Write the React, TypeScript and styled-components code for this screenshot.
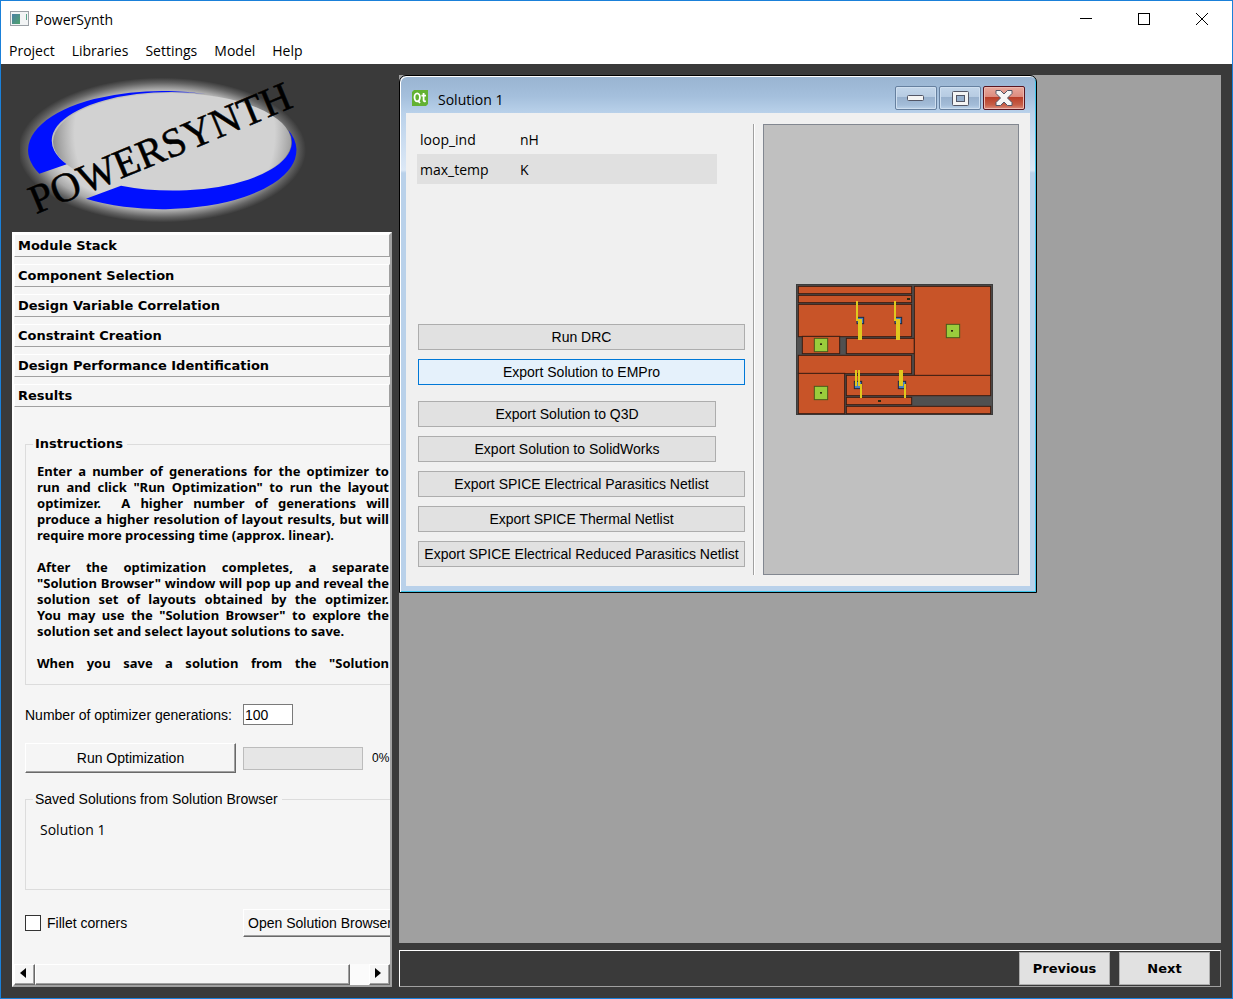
import React from "react";
import styled, { createGlobalStyle, css } from "styled-components";

const UI = `"Open Sans", "Noto Sans", sans-serif`;
const GOTHIC = `"Liberation Sans", Arial, sans-serif`;
const GOTHIC_BOLD = `"DejaVu Sans", Verdana, sans-serif`;
const DARK = "#3a3a3a";
const PANEL = "#f5f5f5";

const GlobalStyle = createGlobalStyle`
  *, *::before, *::after { box-sizing: border-box; }
  body { margin: 0; background: ${DARK}; color: #000; font: 14px/20px ${UI}; }
  button, input { margin: 0; padding: 0; color: inherit; font: inherit; border-radius: 0; }
  svg { display: block; }
`;

const Shell = styled.div`
  display: flex;
  flex-direction: column;
  min-height: 100vh;
  border: 1px solid #1a80d9;
  background: ${DARK};
`;

const TitleBar = styled.header`
  display: flex;
  align-items: center;
  height: 36px;
  padding: 0 1px 0 9px;
  background: #fff;
`;

const AppTitle = styled.h1`
  flex: 1;
  margin: 0 0 0 5px;
  padding-top: 2px;
  font-size: 14px;
  font-weight: 400;
`;

const CaptionButton = styled.button`
  display: grid;
  place-items: center;
  width: 58px;
  height: 36px;
  border: 0;
  background: none;
`;

const MenuBar = styled.nav`
  display: flex;
  gap: 17px;
  height: 27px;
  padding: 4px 8px 0;
  background: #fff;
`;

const MenuItem = styled.button`
  height: 20px;
  border: 0;
  background: none;
`;

const Workspace = styled.main`
  flex: 1;
  display: grid;
  grid-template-columns: 380px minmax(0, 1fr);
  gap: 7px;
  padding: 0 11px 11px;
`;

const Sidebar = styled.div`
  display: flex;
  flex-direction: column;
  min-width: 0;
`;

const LogoBox = styled.div`
  height: 168px;
  padding: 11px 0 0 8px;
`;

const Toolbox = styled.aside`
  flex: 1;
  display: flex;
  flex-direction: column;
  min-width: 0;
  overflow: hidden;
  border: 2px solid;
  border-color: #fff #a0a0a0 #a0a0a0 #fff;
  background: ${PANEL};
  font: 14px/20px ${GOTHIC};
`;

const SectionList = styled.div`
  display: flex;
  flex-direction: column;
  gap: 7px;
`;

const SectionButton = styled.button`
  height: 23px;
  padding: 1px 3px 0;
  border: 1px solid;
  border-color: #fff #a0a0a0 #a0a0a0 #fff;
  background: ${PANEL};
  font: 700 13px/20px ${GOTHIC_BOLD};
  text-align: left;
`;

const ResultsPage = styled.div`
  display: flex;
  flex-direction: column;
  width: 420px;
  padding: 27px 0 0 11px;
`;

const Group = styled.fieldset<{ $height: number }>`
  height: ${(p) => p.$height}px;
  margin: 0;
  padding: 0 0 0 11px;
  border: 1px solid #dcdcdc;
`;

const GroupTitle = styled.legend<{ $strong?: boolean }>`
  margin-left: -4px;
  padding: 0 4px 0 2px;
  line-height: 20px;
  ${(p) => p.$strong && css`font: 700 13px/20px ${GOTHIC_BOLD};`}
`;

const Prose = styled.div`
  width: 352px;
  padding-top: 9px;
  font: 700 13px/16px "Noto Sans", ${UI};
`;

const Paragraph = styled.p`
  margin: 0 0 16px;
`;

const Line = styled.span<{ $last?: boolean }>`
  display: block;
  white-space: nowrap;
  text-align: justify;
  text-align-last: ${(p) => (p.$last ? "left" : "justify")};
`;

const FormGrid = styled.div`
  display: grid;
  grid-template-columns: 211px 120px auto;
  align-items: center;
  column-gap: 7px;
  row-gap: 18px;
  padding: 19px 0 16px;
  white-space: nowrap;
`;

const GenerationsInput = styled.input`
  width: 50px;
  height: 21px;
  padding-left: 1px;
  border: 1px solid #7a7a7a;
  background: #fff;
`;

const raised = css`
  border: 1px solid;
  border-color: #fff #696969 #696969 #fff;
  box-shadow: inset -1px -1px 0 #a0a0a0;
  background: ${PANEL};
`;

const RaisedButton = styled.button<{ $height: number }>`
  ${raised}
  height: ${(p) => p.$height}px;
  white-space: nowrap;
`;

const Progress = styled.progress`
  appearance: none;
  width: 120px;
  height: 23px;
  border: 1px solid #bcbcbc;
  background: #e6e6e6;
  &::-webkit-progress-bar { background: #e6e6e6; }
  &::-webkit-progress-value { background: #06b025; }
`;

const Percent = styled.output`
  padding-left: 2px;
  font-size: 12px;
`;

const SolutionList = styled.ul`
  margin: 0;
  padding: 11px 3px;
  list-style: none;
  font: 14px/20px ${UI};
`;

const FooterGrid = styled.div`
  display: grid;
  grid-template-columns: 211px 154px;
  align-items: center;
  column-gap: 7px;
  padding-top: 19px;
`;

const CheckLabel = styled.label`
  display: flex;
  align-items: center;
  gap: 6px;
`;

const CheckBox = styled.input`
  appearance: none;
  width: 16px;
  height: 16px;
  border: 1px solid #333;
  background: #fff;
`;

const ScrollBar = styled.div`
  display: grid;
  grid-template-columns: 21px 315px 1fr 21px;
  height: 21px;
  margin-top: auto;
  background: #fbfbfb;
`;

const ScrollButton = styled.button`
  ${raised}
  display: grid;
  place-items: center;
  padding: 0 3px 3px 0;
`;

const ScrollThumb = styled.div`
  ${raised}
`;

const MainColumn = styled.div`
  display: flex;
  flex-direction: column;
  gap: 7px;
  min-width: 0;
  padding-top: 11px;
`;

const MdiArea = styled.section`
  position: relative;
  flex: 1;
  min-height: 600px;
  background: #a0a0a0;
`;

const SubWindow = styled.article`
  position: absolute;
  top: 0;
  left: 0;
  width: 638px;
  padding: 0 6px 6px;
  border: 1px solid #000;
  border-radius: 7px 7px 0 0;
  background: linear-gradient(#99b4d1, #a4bfdc 20px, #b9d1ea 37px, #dce8f6 94px, #b9d1ea 97px);
  box-shadow: inset 1px 1px 0 #fff, inset -1px -1px 0 #3ec4ea;
`;

const SubTitleBar = styled.header`
  display: flex;
  align-items: center;
  height: 37px;
  padding: 7px 5px 0 6px;
`;

const SubTitle = styled.h2`
  flex: 1;
  margin: 0 0 0 10px;
  padding-top: 3px;
  font-size: 14px;
  font-weight: 400;
`;

const SubControls = styled.div`
  display: flex;
  gap: 2px;
`;

const GlassButton = styled.button<{ $close?: boolean }>`
  display: grid;
  place-items: center;
  width: 42px;
  height: 24px;
  border: 1px solid ${(p) => (p.$close ? "#5a1520" : "#66809f")};
  border-radius: 2px;
  background: ${(p) =>
    p.$close
      ? "linear-gradient(#e9a99d, #dc8b7e 10px, #b83c27 10px, #c75f48 18px, #dd8f80)"
      : "linear-gradient(#c3d6ea, #b6cbe2 10px, #97b0cd 10px, #a3bcd8 18px, #bdd3ea)"};
  box-shadow: inset 0 0 0 1px ${(p) => (p.$close ? "#edb8ae" : "#cfdff0")};
`;

const SubBody = styled.div`
  display: grid;
  grid-template-columns: 328px 2px 256px;
  justify-content: space-between;
  padding: 11px;
  background: #f0f0f0;
`;

const SolutionPane = styled.div`
  display: flex;
  flex-direction: column;
  justify-content: space-between;
`;

const Metrics = styled.table`
  width: 300px;
  border-collapse: collapse;
  table-layout: fixed;
`;

const MetricRow = styled.tr`
  height: 30px;
  &:nth-child(even) { background: #e0e0e0; }
`;

const cell = css`
  padding: 2px 3px 0;
  font-weight: 400;
  text-align: left;
`;

const MetricName = styled.th`
  ${cell}
  width: 100px;
`;

const MetricUnit = styled.td`
  ${cell}
`;

const Actions = styled.div`
  display: flex;
  flex-direction: column;
  gap: 16px;
  padding: 0 0 8px 1px;
`;

const ActionGroup = styled.div`
  display: flex;
  flex-direction: column;
  gap: 9px;
`;

const ActionButton = styled.button<{ $narrow?: boolean; $active?: boolean }>`
  width: ${(p) => (p.$narrow ? 298 : 327)}px;
  height: 26px;
  border: 1px solid ${(p) => (p.$active ? "#0078d7" : "#adadad")};
  background: ${(p) => (p.$active ? "#e5f1fb" : "#e1e1e1")};
  font: 14px/20px ${GOTHIC};
  white-space: nowrap;
`;

const Separator = styled.div`
  border-left: 1px solid #a0a0a0;
  border-right: 1px solid #fff;
`;

const LayoutView = styled.div`
  display: grid;
  place-items: center;
  height: 451px;
  padding-left: 6px;
  border: 1px solid #828790;
  background: #c0c0c0;
`;

const NavBar = styled.footer`
  display: flex;
  justify-content: flex-end;
  gap: 9px;
  height: 37px;
  padding: 1px 10px 1px 0;
  border: 1px solid;
  border-color: #fff #a0a0a0 #a0a0a0 #fff;
`;

const NavButton = styled.button`
  width: 91px;
  height: 33px;
  padding-top: 1px;
  border: 1px solid #adadad;
  background: #e1e1e1;
  font: 700 13px/20px ${GOTHIC_BOLD};
`;

const SECTIONS = [
  "Module Stack",
  "Component Selection",
  "Design Variable Correlation",
  "Constraint Creation",
  "Design Performance Identification",
  "Results",
];

const INSTRUCTIONS = [
  [
    "Enter a number of generations for the optimizer to",
    'run and click "Run Optimization" to run the layout',
    "optimizer. \u00a0A higher number of generations will",
    "produce a higher resolution of layout results, but will",
    "require more processing time (approx. linear).",
  ],
  [
    "After the optimization completes, a separate",
    '"Solution Browser" window will pop up and reveal the',
    "solution set of layouts obtained by the optimizer.",
    'You may use the "Solution Browser" to explore the',
    "solution set and select layout solutions to save.",
  ],
];

function AppIcon() {
  return (
    <svg width="20" height="16" viewBox="0 0 20 16">
      <defs>
        <linearGradient id="screen" x1="0" y1="0" x2="1" y2="1">
          <stop offset="0" stopColor="#4a7fa5" />
          <stop offset="1" stopColor="#4fa36c" />
        </linearGradient>
      </defs>
      <rect x=".5" y=".5" width="18" height="14" fill="#f2f4f5" stroke="#9aa0a6" />
      <rect x="2" y="3" width="8" height="10" fill="url(#screen)" />
      <rect x="16" y="3" width="1" height="6" fill="#5aa58a" />
    </svg>
  );
}

function Logo() {
  return (
    <svg width="290" height="152" viewBox="60 225 870 456" role="img" aria-label="PowerSynth">
      <defs>
        <radialGradient id="halo">
          <stop offset="0.74" stopColor="#d2d2d2" />
          <stop offset="0.84" stopColor="#aaaaaa" />
          <stop offset="0.93" stopColor="#646464" />
          <stop offset="1" stopColor={DARK} />
        </radialGradient>
        <radialGradient id="shade">
          <stop offset="0.8" stopColor="#808080" stopOpacity="0" />
          <stop offset="1" stopColor="#707070" stopOpacity="0.8" />
        </radialGradient>
        <clipPath id="disc">
          <ellipse cx="516" cy="425" rx="357" ry="146" />
        </clipPath>
      </defs>
      <ellipse cx="486" cy="450" rx="432" ry="217" fill="url(#halo)" />
      <ellipse cx="516" cy="425" rx="357" ry="146" fill="#d2d2d2" />
      <ellipse cx="524" cy="400" rx="375" ry="380" fill="url(#shade)" clipPath="url(#disc)" />
      <g fill="#0010ff">
        <path d="M118 521A402 177 0 0 1 620 283A357 146 0 0 0 200 493Z" />
        <path d="M258 596A402 177 0 0 0 865 390A357 146 0 0 1 363 557Z" />
      </g>
      <text
        transform="translate(108 643) rotate(-22.6)"
        fontFamily='"Liberation Serif", serif'
        fontSize="123"
        stroke="#000"
        strokeWidth="1.5"
      >
        POWERSYNTH
      </text>
    </svg>
  );
}

type Box = [number, number, number, number];

const TRACES: Box[] = [
  [40, 34, 340, 22],
  [40, 61, 340, 22],
  [40, 88, 340, 97],
  [52, 184, 112, 52],
  [184, 190, 204, 46],
  [40, 241, 340, 55],
  [388, 34, 229, 268],
  [40, 295, 139, 121],
  [184, 301, 433, 61],
  [184, 367, 196, 22],
  [184, 394, 433, 22],
];
const DEVICES: Box[] = [
  [88, 190, 40, 40],
  [88, 334, 40, 40],
  [484, 148, 40, 40],
];
const DIES: Box[] = [
  [216, 127, 20, 19],
  [330, 127, 20, 19],
  [208, 319, 22, 22],
  [340, 319, 22, 22],
];
const WIRES: Box[] = [
  [213, 78, 6, 60],
  [219, 132, 12, 63],
  [327, 78, 6, 60],
  [333, 132, 12, 63],
  [210, 285, 6, 48],
  [219, 285, 6, 48],
  [225, 327, 6, 42],
  [342, 285, 12, 48],
  [357, 327, 6, 42],
];
const PADS: Box[] = [
  [366, 69, 9, 6],
  [279, 375, 9, 6],
  [105, 205, 6, 5],
  [105, 351, 6, 5],
  [498, 165, 6, 5],
];

function Rects({ boxes }: { boxes: Box[] }) {
  return (
    <>
      {boxes.map(([x, y, w, h]) => (
        <rect key={`${x}-${y}`} x={x} y={y} width={w} height={h} />
      ))}
    </>
  );
}

function ModuleLayout() {
  return (
    <svg width="197" height="131" viewBox="33 27 591 393" role="img" aria-label="Module layout">
      <rect x="33" y="27" width="591" height="393" fill="#505050" />
      <rect x="34.5" y="28.5" width="588" height="390" fill="none" stroke="#3c3c3c" strokeWidth="3" />
      <g fill="#c85428" stroke="#3a1d12" strokeWidth="3"><Rects boxes={TRACES} /></g>
      <g fill="#9acd3c" stroke="#4a5a1c" strokeWidth="3"><Rects boxes={DEVICES} /></g>
      <g fill="#4a7fc0" stroke="#1f2a3c" strokeWidth="3"><Rects boxes={DIES} /></g>
      <g fill="#e0c81e"><Rects boxes={WIRES} /></g>
      <g fill="#2e2a10"><Rects boxes={PADS} /></g>
    </svg>
  );
}

function QtIcon() {
  return (
    <svg width="16" height="16" viewBox="0 0 16 16">
      <path d="M2 0H16V14L14 16H0V2Z" fill="#63b132" />
      <g fill="none" stroke="#fff" strokeWidth="1.8">
        <ellipse cx="5.2" cy="7.3" rx="2.7" ry="4" />
        <path d="M5.8 10.5L8 13M11.6 3V10.2Q11.6 11.6 13.8 11.2M9.4 5.7H14" />
      </g>
    </svg>
  );
}

export default function App() {
  return (
    <Shell>
      <GlobalStyle />
      <TitleBar>
        <AppIcon />
        <AppTitle>PowerSynth</AppTitle>
        <CaptionButton aria-label="Minimize">
          <svg width="12" height="12" stroke="#000"><path d="M0 5.5H12" /></svg>
        </CaptionButton>
        <CaptionButton aria-label="Maximize">
          <svg width="12" height="12" fill="none" stroke="#000"><rect x=".5" y=".5" width="11" height="11" /></svg>
        </CaptionButton>
        <CaptionButton aria-label="Close">
          <svg width="12" height="12" stroke="#000"><path d="M0 0L12 12M12 0L0 12" /></svg>
        </CaptionButton>
      </TitleBar>
      <MenuBar>
        {["Project", "Libraries", "Settings", "Model", "Help"].map((m) => (
          <MenuItem key={m}>{m}</MenuItem>
        ))}
      </MenuBar>
      <Workspace>
        <Sidebar>
          <LogoBox><Logo /></LogoBox>
          <Toolbox>
            <SectionList>
              {SECTIONS.map((s) => (
                <SectionButton key={s}>{s}</SectionButton>
              ))}
            </SectionList>
            <ResultsPage>
              <Group $height={251}>
                <GroupTitle $strong>Instructions</GroupTitle>
                <Prose>
                  {INSTRUCTIONS.map((lines) => (
                    <Paragraph key={lines[0]}>
                      {lines.map((line, i) => (
                        <Line key={line} $last={i === lines.length - 1}>{line}</Line>
                      ))}
                    </Paragraph>
                  ))}
                  <Paragraph>
                    <Line>When you save a solution from the "Solution</Line>
                  </Paragraph>
                </Prose>
              </Group>
              <FormGrid>
                <label htmlFor="generations">Number of optimizer generations:</label>
                <GenerationsInput id="generations" defaultValue="100" />
                <span />
                <RaisedButton $height={30}>Run Optimization</RaisedButton>
                <Progress value={0} max={100} aria-label="Optimization progress" />
                <Percent>0%</Percent>
              </FormGrid>
              <Group $height={101}>
                <GroupTitle>Saved Solutions from Solution Browser</GroupTitle>
                <SolutionList>
                  <li>Solution 1</li>
                </SolutionList>
              </Group>
              <FooterGrid>
                <CheckLabel>
                  <CheckBox type="checkbox" />
                  Fillet corners
                </CheckLabel>
                <RaisedButton $height={28}>Open Solution Browser</RaisedButton>
              </FooterGrid>
            </ResultsPage>
            <ScrollBar>
              <ScrollButton aria-label="Scroll left">
                <svg width="6" height="10"><path d="M6 0V10L0 5Z" /></svg>
              </ScrollButton>
              <ScrollThumb />
              <span />
              <ScrollButton aria-label="Scroll right">
                <svg width="6" height="10"><path d="M0 0V10L6 5Z" /></svg>
              </ScrollButton>
            </ScrollBar>
          </Toolbox>
        </Sidebar>
        <MainColumn>
          <MdiArea>
            <SubWindow>
              <SubTitleBar>
                <QtIcon />
                <SubTitle>Solution 1</SubTitle>
                <SubControls>
                  <GlassButton aria-label="Minimize">
                    <svg width="18" height="7"><rect x=".5" y=".5" width="16" height="5" rx="1" fill="#f4f4f4" stroke="#535666" /></svg>
                  </GlassButton>
                  <GlassButton aria-label="Maximize">
                    <svg width="17" height="15" stroke="#535666">
                      <rect x=".5" y=".5" width="16" height="14" rx="1" fill="#f4f4f4" />
                      <rect x="4.5" y="4.5" width="8" height="6" fill="#97b0cd" />
                    </svg>
                  </GlassButton>
                  <GlassButton $close aria-label="Close">
                    <svg width="18" height="16" viewBox="0 0 18 16">
                      <path
                        d="M1 .5H5.5L9 4L12.500 .5H17V3.500L12.500 8L17 12.500V15.500H12.500L9 12L5.500 15.500H1V12.500L5.500 8L1 3.500Z"
                        fill="#f6f6f6"
                        stroke="#535666"
                        strokeLinejoin="round"
                      />
                    </svg>
                  </GlassButton>
                </SubControls>
              </SubTitleBar>
              <SubBody>
                <SolutionPane>
                  <Metrics>
                    <tbody>
                      <MetricRow><MetricName scope="row">loop_ind</MetricName><MetricUnit>nH</MetricUnit></MetricRow>
                      <MetricRow><MetricName scope="row">max_temp</MetricName><MetricUnit>K</MetricUnit></MetricRow>
                    </tbody>
                  </Metrics>
                  <Actions>
                    <ActionGroup>
                      <ActionButton>Run DRC</ActionButton>
                      <ActionButton $active>Export Solution to EMPro</ActionButton>
                    </ActionGroup>
                    <ActionGroup>
                      <ActionButton $narrow>Export Solution to Q3D</ActionButton>
                      <ActionButton $narrow>Export Solution to SolidWorks</ActionButton>
                      <ActionButton>Export SPICE Electrical Parasitics Netlist</ActionButton>
                      <ActionButton>Export SPICE Thermal Netlist</ActionButton>
                      <ActionButton>Export SPICE Electrical Reduced Parasitics Netlist</ActionButton>
                    </ActionGroup>
                  </Actions>
                </SolutionPane>
                <Separator />
                <LayoutView><ModuleLayout /></LayoutView>
              </SubBody>
            </SubWindow>
          </MdiArea>
          <NavBar>
            <NavButton>Previous</NavButton>
            <NavButton>Next</NavButton>
          </NavBar>
        </MainColumn>
      </Workspace>
    </Shell>
  );
}
